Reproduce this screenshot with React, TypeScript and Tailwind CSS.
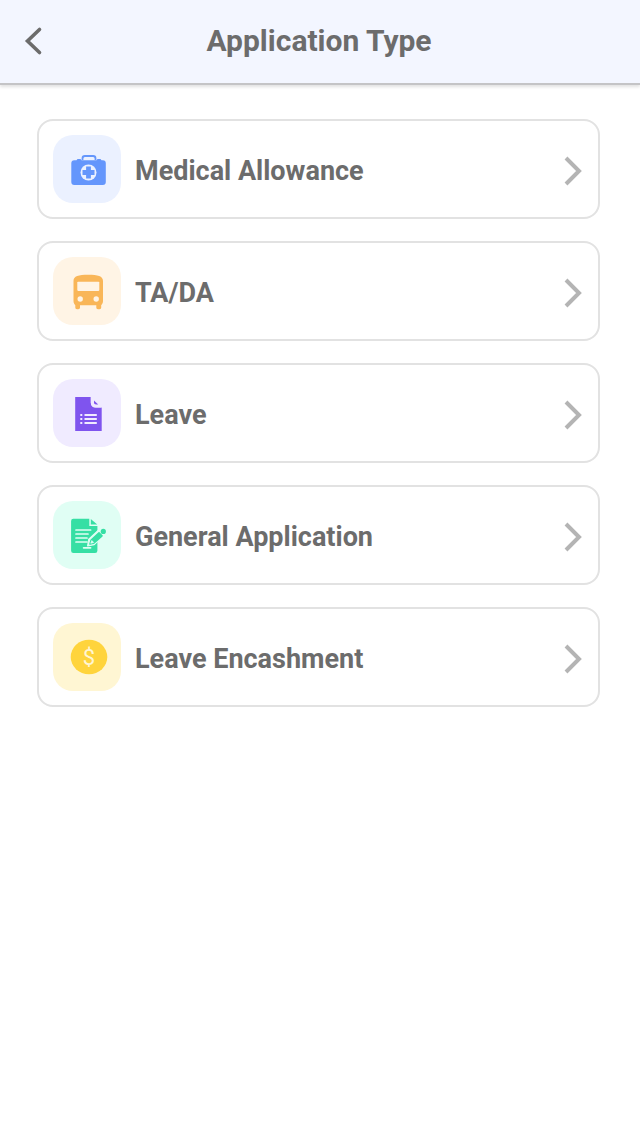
import type { ReactNode } from "react";

const applications: {
	name: string;
	href: string;
	tile: string;
	icon: ReactNode;
}[] = [
	{
		name: "Medical Allowance",
		href: "#medical-allowance",
		tile: "bg-[#ebf1ff]",
		icon: (
			<>
				<path d="M29.5 25v-1.6a2.4 2.4 0 0 1 2.4-2.4h8.2a2.4 2.4 0 0 1 2.4 2.4V25" fill="none" stroke="#6496fc" strokeWidth="1.8" />
				<path
					d="M21.5 25.2h2l1-1.2h3l1 1.2h15l1-1.2h3l1 1.2h1.3a3 3 0 0 1 3 3V47a3 3 0 0 1-3 3H21.3a3 3 0 0 1-3-3V28.2a3 3 0 0 1 3-3z"
					fill="#6496fc"
				/>
				<circle cx="35.5" cy="37.5" r="8" fill="#ebf1ff" />
				<path d="M33.1 31.5h4.8v3.6h3.6v4.8h-3.6v3.6h-4.8v-3.6h-3.6v-4.8h3.6z" fill="#6496fc" />
			</>
		),
	},
	{
		name: "TA/DA",
		href: "#ta-da",
		tile: "bg-[#fff4e5]",
		icon: (
			<>
				<path
					d="M20.5 24c0-5 5-6.3 14.7-6.3S50 19 50 24v20c0 1.8-.6 3-1.8 4.2v2.3c0 1-.7 1.7-1.7 1.7H45c-1 0-1.7-.7-1.7-1.7v-2.2H27v2.2c0 1-.7 1.7-1.7 1.7H24c-1 0-1.7-.7-1.7-1.7v-2.3c-1.2-1.2-1.8-2.4-1.8-4.2z"
					fill="#f9b658"
				/>
				<rect x="24.3" y="24.7" width="22" height="9.2" rx="0.8" fill="#fff4e5" />
				<circle cx="27.2" cy="42" r="2.7" fill="#fff4e5" />
				<circle cx="43.2" cy="42" r="2.7" fill="#fff4e5" />
			</>
		),
	},
	{
		name: "Leave",
		href: "#leave",
		tile: "bg-[#f0ebff]",
		icon: (
			<>
				<path d="M22.2 18h15.6v5.5c0 3.2 1.8 5 5 5h5.9V52H22.2z" fill="#7f54ee" />
				<path d="M37.8 18l10.9 10.5h-5.9c-3.2 0-5-1.8-5-5z" fill="#f0ebff" />
				<path d="M41 21.6l4.2 3.9h-2c-1.5 0-2.2-.7-2.2-2.2z" fill="#7f54ee" />
				<path d="M27.3 36h2M27.3 40h2M27.3 44h2M31.5 36h12.3M31.5 40h12.3M31.5 44h12.3" stroke="#f0ebff" strokeWidth="1.9" />
			</>
		),
	},
	{
		name: "General Application",
		href: "#general-application",
		tile: "bg-[#e0fef4]",
		icon: (
			<>
				<path d="M20.5 17.7h15.8v7.2h8.1v24.8a2.3 2.3 0 0 1-2.3 2.3H20.4a2.3 2.3 0 0 1-2.3-2.3V20a2.3 2.3 0 0 1 2.4-2.3z" fill="#36dfa4" />
				<path d="M37.8 17.9l6.4 5.7h-6.4z" fill="#36dfa4" />
				<path d="M23 29h14.6M23 33h12M23 37h11M23 41h11M30.6 46.8h7" stroke="#e0fef4" strokeWidth="1.7" strokeLinecap="round" />
				<path d="M34.6 45l1.2-6.8L46 28.6l5.6 5.2-10.4 9.8z" fill="#e0fef4" stroke="#e0fef4" strokeWidth="1.2" strokeLinejoin="round" />
				<path d="M37 43l1.2-4 7.8-7.2 3 3-7.9 7.2z" fill="#36dfa4" stroke="#36dfa4" strokeWidth="1.6" strokeLinejoin="round" />
				<path d="M37.8 42.2l1-2.6 1.8 1.8z" fill="#e0fef4" stroke="#e0fef4" strokeWidth="0.8" />
				<circle cx="50.3" cy="30.4" r="2.6" fill="#36dfa4" />
			</>
		),
	},
	{
		name: "Leave Encashment",
		href: "#leave-encashment",
		tile: "bg-[#fff6d3]",
		icon: (
			<>
				<ellipse cx="36" cy="34" rx="18.3" ry="17.3" fill="#ffd43c" />
				<text x="36" y="42" textAnchor="middle" fill="#fff6d3" className="font-[Roboto,sans-serif] text-[22px] font-normal">
					$
				</text>
			</>
		),
	},
];

export default function ApplicationTypePage() {
	return (
		<div className="min-h-screen bg-white font-[Roboto,sans-serif] font-bold text-[#6c6c6c]">
			{/* Header */}
			<header className="grid grid-cols-[48px_1fr_50px] items-center border-b-2 border-[#c4c4c6] bg-[#f3f6ff] px-2.5 pt-[11px] pb-[13px] shadow-[0_2px_3px_rgba(0,0,0,0.12)]">
				<button type="button" aria-label="Back" className="flex h-[59px] items-center justify-center">
					<svg width="20" height="30" viewBox="0 0 20 30" fill="none">
						<path d="M15.5 3.5L3.5 15l12 11.5" stroke="#6c6c6c" strokeWidth="3.6" strokeLinecap="round" />
					</svg>
				</button>
				<h1 className="text-center text-[30px] leading-9">Application Type</h1>
			</header>

			{/* Application list */}
			<main className="pt-[34px] pr-10 pb-10 pl-[37px]">
				<ul className="flex flex-col gap-[22px]">
					{applications.map(app => (
						<li key={app.name}>
							<a
								href={app.href}
								className="flex items-center rounded-2xl border-2 border-[#e2e2e2] p-3.5"
							>
								<span className={`mr-3.5 size-[68px] shrink-0 rounded-[20px] ${app.tile}`}>
									<svg viewBox="0 0 68 68" className="size-full" aria-hidden="true">
										{app.icon}
									</svg>
								</span>
								<span className="flex grow items-center justify-between pt-1">
									<span className="text-[27px] leading-8">{app.name}</span>
									<svg width="20" height="32" viewBox="0 0 20 32" fill="none" aria-hidden="true">
										<path d="M2 3L15 16 2 29" stroke="#b4b4b4" strokeWidth="4" />
									</svg>
								</span>
							</a>
						</li>
					))}
				</ul>
			</main>
		</div>
	);
}
